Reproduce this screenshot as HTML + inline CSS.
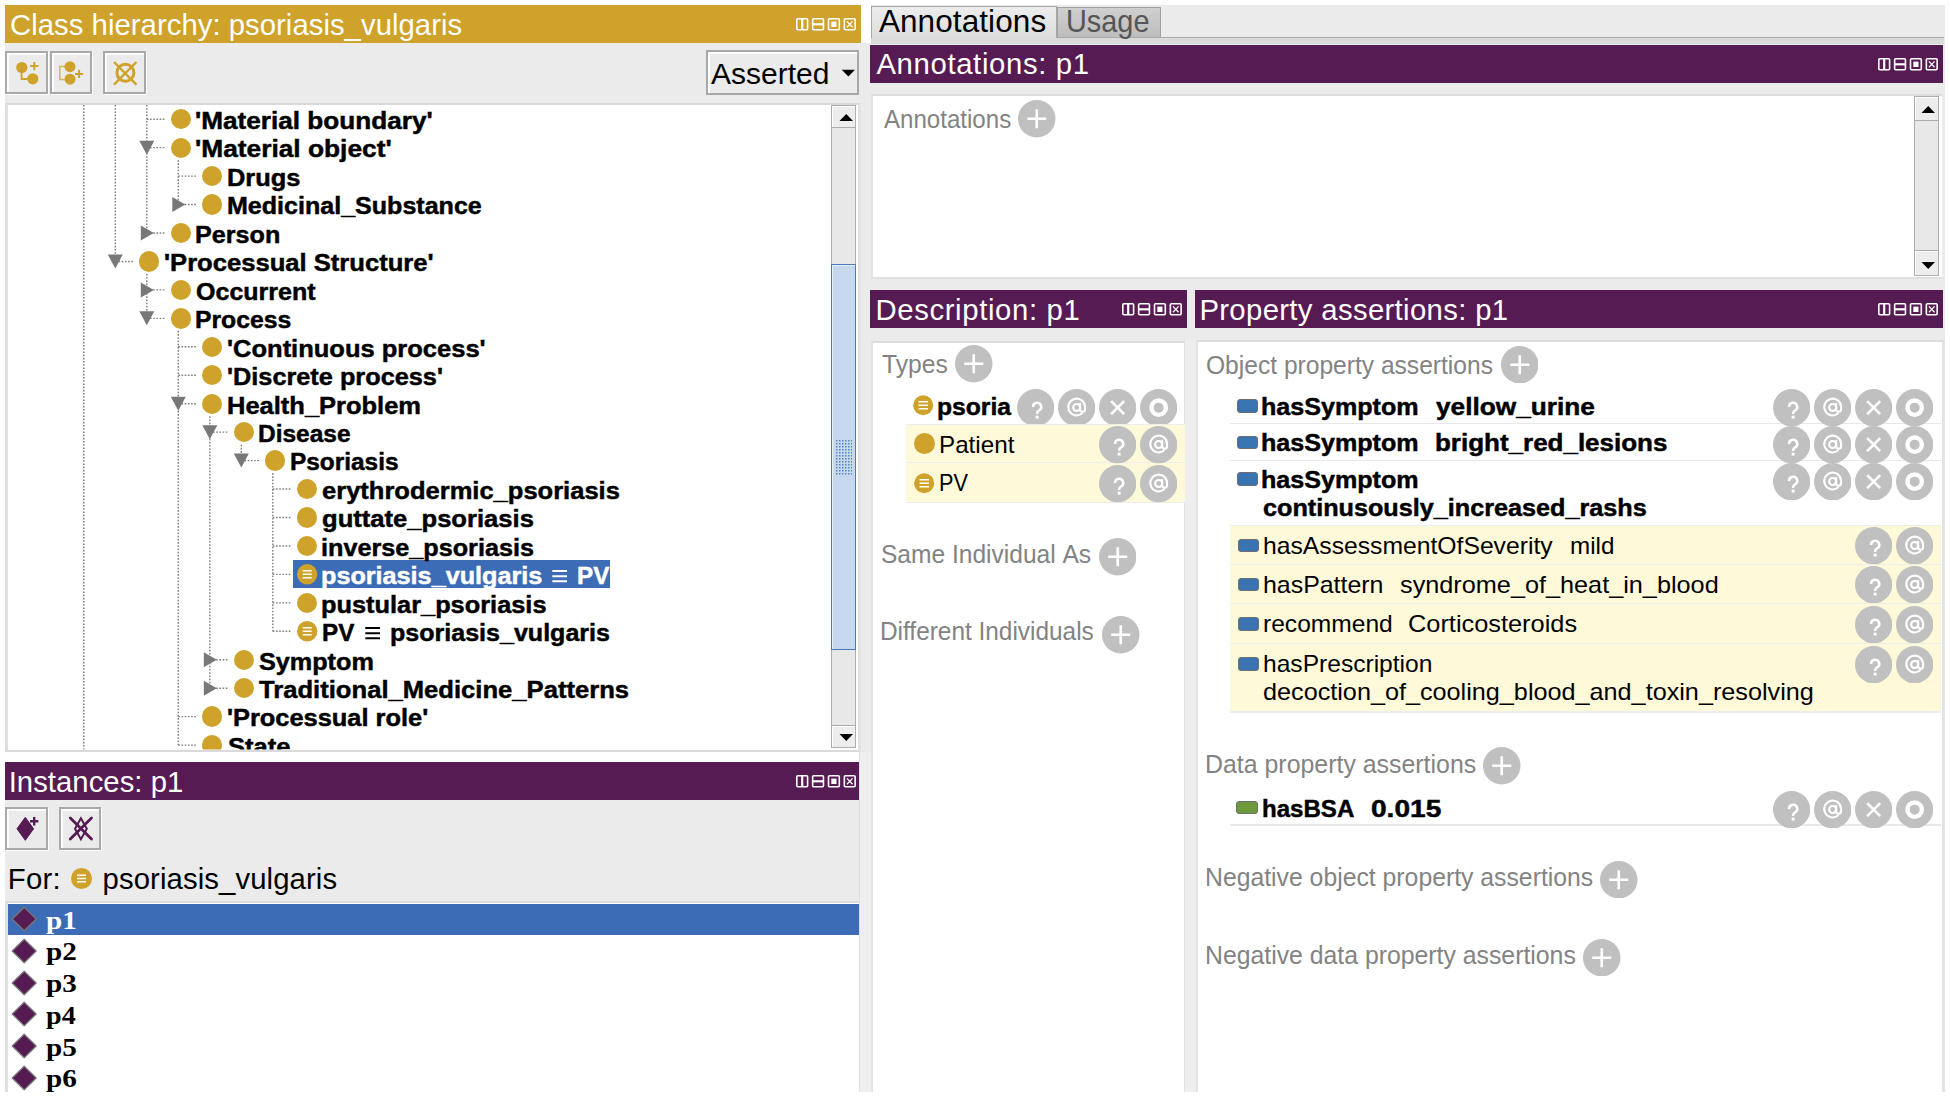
<!DOCTYPE html><html><head><meta charset="utf-8"><style>
*{margin:0;padding:0;box-sizing:border-box}
html,body{width:1950px;height:1097px;overflow:hidden;background:#fff}
body{position:relative;font-family:"Liberation Sans",sans-serif}
.ab{position:absolute}
.t{position:absolute;white-space:nowrap}
.hdr{position:absolute;color:#fff;font-size:29.3px;line-height:38px;white-space:nowrap}
.tree{position:absolute;white-space:nowrap;font-weight:bold;font-size:22.5px;letter-spacing:1.45px;color:#000;line-height:28px}
.lbl{position:absolute;white-space:nowrap;font-size:26px;letter-spacing:-0.7px;color:#7C7C7C;line-height:30px}
.btn{position:absolute;border-radius:50%;background:#C0C0C0}
</style></head><body>
<div class="ab" style="left:5px;top:5px;width:856px;height:38px;background:#CEA22B"></div>
<div class="t" style="left:10.00px;top:5.05px;line-height:40px;font-family:'Liberation Sans';font-weight:normal;font-size:29.3px;letter-spacing:0.033px;color:#fff;">Class&#160;hierarchy:&#160;psoriasis_vulgaris</div>
<svg class="ab" style="left:796px;top:18px" width="62" height="14" viewBox="0 0 62 14"><rect x="0.8" y="0.8" width="10.8" height="11" rx="1" fill="none" stroke="#fff" stroke-width="1.6"/><line x1="6.2" y1="1" x2="6.2" y2="11.8" stroke="#fff" stroke-width="2.2"/><rect x="16.65" y="0.8" width="10.8" height="11" rx="1" fill="none" stroke="#fff" stroke-width="1.6"/><line x1="16.85" y1="6.3" x2="27.45" y2="6.3" stroke="#fff" stroke-width="2.2"/><rect x="32.5" y="0.8" width="10.8" height="11" rx="1" fill="none" stroke="#fff" stroke-width="1.6"/><rect x="35.3" y="3.6" width="5.2" height="5.4" fill="#fff"/><rect x="48.349999999999994" y="0.8" width="10.8" height="11" rx="1" fill="none" stroke="#fff" stroke-width="1.6"/><path d="M50.949999999999996 3.4 L56.55 9.2 M56.55 3.4 L50.949999999999996 9.2" stroke="#fff" stroke-width="1.3"/></svg>
<div class="ab" style="left:5px;top:43px;width:856px;height:60px;background:#EBEBEB"></div>
<div class="ab" style="left:5.3px;top:51px;width:42.4px;height:42.6px;border:2px solid #A9A9A9;box-shadow:inset 1.8px 1.8px 0 #fff, 1px 1px 0 #fff"></div>
<div class="ab" style="left:49.8px;top:51px;width:42.4px;height:42.6px;border:2px solid #A9A9A9;box-shadow:inset 1.8px 1.8px 0 #fff, 1px 1px 0 #fff"></div>
<div class="ab" style="left:103.3px;top:51px;width:42.4px;height:42.6px;border:2px solid #A9A9A9;box-shadow:inset 1.8px 1.8px 0 #fff, 1px 1px 0 #fff"></div>
<svg class="ab" style="left:5px;top:51px" width="142" height="43" viewBox="5 51 142 43">
<g fill="#CEA22B" stroke="none">
<circle cx="21.8" cy="67.5" r="5.6"/><circle cx="32.8" cy="78.8" r="5.6"/>
</g>
<path d="M21.6 70 V79 H30" fill="none" stroke="#CEA22B" stroke-width="1.9"/>
<path d="M30.2 66.1 H38.4 M34.3 62 V70.2" stroke="#CEA22B" stroke-width="2"/>
<g fill="#CEA22B"><circle cx="70" cy="66.7" r="5.5"/><circle cx="70" cy="79.2" r="5.5"/></g>
<path d="M65 66.4 H59.8 V79.4 H65" fill="none" stroke="#CEA22B" stroke-width="1.5" opacity="0.75"/>
<path d="M75 73.9 H83.2 M79.1 69.8 V78" stroke="#CEA22B" stroke-width="2"/>
<circle cx="125.4" cy="72.8" r="8.5" fill="none" stroke="#CEA22B" stroke-width="3"/>
<path d="M114 62 L136.4 84.6 M136.4 62 L114 84.6" stroke="#CEA22B" stroke-width="2.4"/>
</svg>
<div class="ab" style="left:706px;top:50px;width:153px;height:45px;border:2px solid #A8A8A8;box-shadow:inset 2px 2px 0 #fff;background:#EBEBEB"></div>
<div class="t" style="left:711.00px;top:54.01px;line-height:40px;font-family:'Liberation Sans';font-weight:normal;font-size:30px;letter-spacing:-0.001px;color:#000;">Asserted</div>
<svg class="ab" style="left:841px;top:69px" width="15" height="9"><path d="M0.7 0.8 H14 L7.35 7.5 Z" fill="#000"/></svg>
<div class="ab" style="left:5px;top:103px;width:856px;height:649px;background:#fff;border-top:2px solid #D9D9D9;border-left:3px solid #E0E0E0;border-bottom:2px solid #DADADA;border-right:3px solid #E3E3E3"></div>
<div class="ab" style="left:0;top:0;width:1950px;height:1097px;clip-path:inset(105px 1120px 347.4px 8px)">
<svg class="ab" style="left:8px;top:105px" width="822" height="645" viewBox="8 105 822 645"><line x1="83.80000000000001" y1="105" x2="83.80000000000001" y2="750" stroke="#7C7C7C" stroke-width="1.4" stroke-dasharray="1.6 1.6" fill="none"/><line x1="115.30000000000001" y1="105" x2="115.30000000000001" y2="261.45" stroke="#7C7C7C" stroke-width="1.4" stroke-dasharray="1.6 1.6" fill="none"/><line x1="146.8" y1="105" x2="146.8" y2="233.0" stroke="#7C7C7C" stroke-width="1.4" stroke-dasharray="1.6 1.6" fill="none"/><line x1="146.8" y1="273.95" x2="146.8" y2="318.35" stroke="#7C7C7C" stroke-width="1.4" stroke-dasharray="1.6 1.6" fill="none"/><line x1="178.3" y1="160.15" x2="178.3" y2="204.55" stroke="#7C7C7C" stroke-width="1.4" stroke-dasharray="1.6 1.6" fill="none"/><line x1="178.3" y1="330.85" x2="178.3" y2="745.1" stroke="#7C7C7C" stroke-width="1.4" stroke-dasharray="1.6 1.6" fill="none"/><line x1="209.8" y1="416.2" x2="209.8" y2="688.2" stroke="#7C7C7C" stroke-width="1.4" stroke-dasharray="1.6 1.6" fill="none"/><line x1="241.3" y1="444.65" x2="241.3" y2="460.59999999999997" stroke="#7C7C7C" stroke-width="1.4" stroke-dasharray="1.6 1.6" fill="none"/><line x1="272.8" y1="473.09999999999997" x2="272.8" y2="631.3000000000001" stroke="#7C7C7C" stroke-width="1.4" stroke-dasharray="1.6 1.6" fill="none"/><line x1="146.8" y1="119.2" x2="165.60000000000002" y2="119.2" stroke="#7C7C7C" stroke-width="1.4" stroke-dasharray="1.6 1.6" fill="none"/><line x1="146.8" y1="147.65" x2="165.60000000000002" y2="147.65" stroke="#7C7C7C" stroke-width="1.4" stroke-dasharray="1.6 1.6" fill="none"/><path d="M139.3 140.65 H154.3 L146.8 154.65 Z" fill="#787878"/><line x1="178.3" y1="176.1" x2="197.10000000000002" y2="176.1" stroke="#7C7C7C" stroke-width="1.4" stroke-dasharray="1.6 1.6" fill="none"/><line x1="178.3" y1="204.55" x2="197.10000000000002" y2="204.55" stroke="#7C7C7C" stroke-width="1.4" stroke-dasharray="1.6 1.6" fill="none"/><path d="M172.3 197.05 V212.05 L185.3 204.55 Z" fill="#787878"/><line x1="146.8" y1="233.0" x2="165.60000000000002" y2="233.0" stroke="#7C7C7C" stroke-width="1.4" stroke-dasharray="1.6 1.6" fill="none"/><path d="M140.8 225.5 V240.5 L153.8 233.0 Z" fill="#787878"/><line x1="115.30000000000001" y1="261.45" x2="134.10000000000002" y2="261.45" stroke="#7C7C7C" stroke-width="1.4" stroke-dasharray="1.6 1.6" fill="none"/><path d="M107.80000000000001 254.45 H122.80000000000001 L115.30000000000001 268.45 Z" fill="#787878"/><line x1="146.8" y1="289.9" x2="165.60000000000002" y2="289.9" stroke="#7C7C7C" stroke-width="1.4" stroke-dasharray="1.6 1.6" fill="none"/><path d="M140.8 282.4 V297.4 L153.8 289.9 Z" fill="#787878"/><line x1="146.8" y1="318.35" x2="165.60000000000002" y2="318.35" stroke="#7C7C7C" stroke-width="1.4" stroke-dasharray="1.6 1.6" fill="none"/><path d="M139.3 311.35 H154.3 L146.8 325.35 Z" fill="#787878"/><line x1="178.3" y1="346.8" x2="197.10000000000002" y2="346.8" stroke="#7C7C7C" stroke-width="1.4" stroke-dasharray="1.6 1.6" fill="none"/><line x1="178.3" y1="375.25" x2="197.10000000000002" y2="375.25" stroke="#7C7C7C" stroke-width="1.4" stroke-dasharray="1.6 1.6" fill="none"/><line x1="178.3" y1="403.7" x2="197.10000000000002" y2="403.7" stroke="#7C7C7C" stroke-width="1.4" stroke-dasharray="1.6 1.6" fill="none"/><path d="M170.8 396.7 H185.8 L178.3 410.7 Z" fill="#787878"/><line x1="209.8" y1="432.15" x2="228.60000000000002" y2="432.15" stroke="#7C7C7C" stroke-width="1.4" stroke-dasharray="1.6 1.6" fill="none"/><path d="M202.3 425.15 H217.3 L209.8 439.15 Z" fill="#787878"/><line x1="241.3" y1="460.59999999999997" x2="260.1" y2="460.59999999999997" stroke="#7C7C7C" stroke-width="1.4" stroke-dasharray="1.6 1.6" fill="none"/><path d="M233.8 453.59999999999997 H248.8 L241.3 467.59999999999997 Z" fill="#787878"/><line x1="272.8" y1="489.04999999999995" x2="291.6" y2="489.04999999999995" stroke="#7C7C7C" stroke-width="1.4" stroke-dasharray="1.6 1.6" fill="none"/><line x1="272.8" y1="517.5" x2="291.6" y2="517.5" stroke="#7C7C7C" stroke-width="1.4" stroke-dasharray="1.6 1.6" fill="none"/><line x1="272.8" y1="545.95" x2="291.6" y2="545.95" stroke="#7C7C7C" stroke-width="1.4" stroke-dasharray="1.6 1.6" fill="none"/><line x1="272.8" y1="574.4" x2="291.6" y2="574.4" stroke="#7C7C7C" stroke-width="1.4" stroke-dasharray="1.6 1.6" fill="none"/><line x1="272.8" y1="602.85" x2="291.6" y2="602.85" stroke="#7C7C7C" stroke-width="1.4" stroke-dasharray="1.6 1.6" fill="none"/><line x1="272.8" y1="631.3000000000001" x2="291.6" y2="631.3000000000001" stroke="#7C7C7C" stroke-width="1.4" stroke-dasharray="1.6 1.6" fill="none"/><line x1="209.8" y1="659.75" x2="228.60000000000002" y2="659.75" stroke="#7C7C7C" stroke-width="1.4" stroke-dasharray="1.6 1.6" fill="none"/><path d="M203.8 652.25 V667.25 L216.8 659.75 Z" fill="#787878"/><line x1="209.8" y1="688.2" x2="228.60000000000002" y2="688.2" stroke="#7C7C7C" stroke-width="1.4" stroke-dasharray="1.6 1.6" fill="none"/><path d="M203.8 680.7 V695.7 L216.8 688.2 Z" fill="#787878"/><line x1="178.3" y1="716.65" x2="197.10000000000002" y2="716.65" stroke="#7C7C7C" stroke-width="1.4" stroke-dasharray="1.6 1.6" fill="none"/><line x1="178.3" y1="745.1" x2="197.10000000000002" y2="745.1" stroke="#7C7C7C" stroke-width="1.4" stroke-dasharray="1.6 1.6" fill="none"/></svg>
<div class="ab" style="left:293px;top:560px;width:317px;height:28px;background:#3D6CB6"></div>
<div class="ab" style="left:170.6px;top:109.0px;width:20.4px;height:20.4px;border-radius:50%;background:#CEA22B"></div>
<div class="t" style="left:195.26px;top:101.03px;line-height:40px;font-family:'Liberation Sans';font-weight:bold;font-size:23px;color:#000;transform:scaleX(1.1370);transform-origin:0 0;-webkit-text-stroke:0.45px #000;">'Material&#160;boundary'</div>
<div class="ab" style="left:170.6px;top:137.5px;width:20.4px;height:20.4px;border-radius:50%;background:#CEA22B"></div>
<div class="t" style="left:195.26px;top:129.48px;line-height:40px;font-family:'Liberation Sans';font-weight:bold;font-size:23px;color:#000;transform:scaleX(1.1436);transform-origin:0 0;-webkit-text-stroke:0.45px #000;">'Material&#160;object'</div>
<div class="ab" style="left:202.1px;top:165.9px;width:20.4px;height:20.4px;border-radius:50%;background:#CEA22B"></div>
<div class="t" style="left:226.79px;top:157.93px;line-height:40px;font-family:'Liberation Sans';font-weight:bold;font-size:23px;color:#000;transform:scaleX(1.1058);transform-origin:0 0;-webkit-text-stroke:0.45px #000;">Drugs</div>
<div class="ab" style="left:202.1px;top:194.4px;width:20.4px;height:20.4px;border-radius:50%;background:#CEA22B"></div>
<div class="t" style="left:226.81px;top:186.38px;line-height:40px;font-family:'Liberation Sans';font-weight:bold;font-size:23px;color:#000;transform:scaleX(1.0891);transform-origin:0 0;-webkit-text-stroke:0.45px #000;">Medicinal_Substance</div>
<div class="ab" style="left:170.6px;top:222.8px;width:20.4px;height:20.4px;border-radius:50%;background:#CEA22B"></div>
<div class="t" style="left:195.31px;top:214.83px;line-height:40px;font-family:'Liberation Sans';font-weight:bold;font-size:23px;color:#000;transform:scaleX(1.0932);transform-origin:0 0;-webkit-text-stroke:0.45px #000;">Person</div>
<div class="ab" style="left:139.1px;top:251.2px;width:20.4px;height:20.4px;border-radius:50%;background:#CEA22B"></div>
<div class="t" style="left:163.79px;top:243.28px;line-height:40px;font-family:'Liberation Sans';font-weight:bold;font-size:23px;color:#000;transform:scaleX(1.1128);transform-origin:0 0;-webkit-text-stroke:0.45px #000;">'Processual&#160;Structure'</div>
<div class="ab" style="left:170.6px;top:279.7px;width:20.4px;height:20.4px;border-radius:50%;background:#CEA22B"></div>
<div class="t" style="left:196.40px;top:271.73px;line-height:40px;font-family:'Liberation Sans';font-weight:bold;font-size:23px;color:#000;transform:scaleX(1.0883);transform-origin:0 0;-webkit-text-stroke:0.45px #000;">Occurrent</div>
<div class="ab" style="left:170.6px;top:308.2px;width:20.4px;height:20.4px;border-radius:50%;background:#CEA22B"></div>
<div class="t" style="left:195.32px;top:300.18px;line-height:40px;font-family:'Liberation Sans';font-weight:bold;font-size:23px;color:#000;transform:scaleX(1.0751);transform-origin:0 0;-webkit-text-stroke:0.45px #000;">Process</div>
<div class="ab" style="left:202.1px;top:336.6px;width:20.4px;height:20.4px;border-radius:50%;background:#CEA22B"></div>
<div class="t" style="left:226.79px;top:328.63px;line-height:40px;font-family:'Liberation Sans';font-weight:bold;font-size:23px;color:#000;transform:scaleX(1.1086);transform-origin:0 0;-webkit-text-stroke:0.45px #000;">'Continuous&#160;process'</div>
<div class="ab" style="left:202.1px;top:365.1px;width:20.4px;height:20.4px;border-radius:50%;background:#CEA22B"></div>
<div class="t" style="left:226.80px;top:357.08px;line-height:40px;font-family:'Liberation Sans';font-weight:bold;font-size:23px;color:#000;transform:scaleX(1.0998);transform-origin:0 0;-webkit-text-stroke:0.45px #000;">'Discrete&#160;process'</div>
<div class="ab" style="left:202.1px;top:393.5px;width:20.4px;height:20.4px;border-radius:50%;background:#CEA22B"></div>
<div class="t" style="left:226.79px;top:385.53px;line-height:40px;font-family:'Liberation Sans';font-weight:bold;font-size:23px;color:#000;transform:scaleX(1.1079);transform-origin:0 0;-webkit-text-stroke:0.45px #000;">Health_Problem</div>
<div class="ab" style="left:233.6px;top:421.9px;width:20.4px;height:20.4px;border-radius:50%;background:#CEA22B"></div>
<div class="t" style="left:258.34px;top:413.98px;line-height:40px;font-family:'Liberation Sans';font-weight:bold;font-size:23px;color:#000;transform:scaleX(1.0638);transform-origin:0 0;-webkit-text-stroke:0.45px #000;">Disease</div>
<div class="ab" style="left:265.1px;top:450.4px;width:20.4px;height:20.4px;border-radius:50%;background:#CEA22B"></div>
<div class="t" style="left:289.84px;top:442.43px;line-height:40px;font-family:'Liberation Sans';font-weight:bold;font-size:23px;color:#000;transform:scaleX(1.0607);transform-origin:0 0;-webkit-text-stroke:0.45px #000;">Psoriasis</div>
<div class="ab" style="left:296.6px;top:478.8px;width:20.4px;height:20.4px;border-radius:50%;background:#CEA22B"></div>
<div class="t" style="left:322.40px;top:470.88px;line-height:40px;font-family:'Liberation Sans';font-weight:bold;font-size:23px;color:#000;transform:scaleX(1.1096);transform-origin:0 0;-webkit-text-stroke:0.45px #000;">erythrodermic_psoriasis</div>
<div class="ab" style="left:296.6px;top:507.3px;width:20.4px;height:20.4px;border-radius:50%;background:#CEA22B"></div>
<div class="t" style="left:322.40px;top:499.33px;line-height:40px;font-family:'Liberation Sans';font-weight:bold;font-size:23px;color:#000;transform:scaleX(1.1125);transform-origin:0 0;-webkit-text-stroke:0.45px #000;">guttate_psoriasis</div>
<div class="ab" style="left:296.6px;top:535.8px;width:20.4px;height:20.4px;border-radius:50%;background:#CEA22B"></div>
<div class="t" style="left:321.30px;top:527.78px;line-height:40px;font-family:'Liberation Sans';font-weight:bold;font-size:23px;color:#000;transform:scaleX(1.0958);transform-origin:0 0;-webkit-text-stroke:0.45px #000;">inverse_psoriasis</div>
<svg class="ab" style="left:296.6px;top:564.2px" width="21" height="21" viewBox="0 0 21 21"><circle cx="10.2" cy="10.2" r="10.2" fill="#CEA22B"/><path d="M5.7 6.7 H14.7 M5.7 10.2 H14.7 M5.7 13.7 H14.7" stroke="#fff" stroke-width="1.6"/></svg>
<div class="t" style="left:321.20px;top:556.23px;line-height:40px;font-family:'Liberation Sans';font-weight:bold;font-size:23px;color:#fff;transform:scaleX(1.0954);transform-origin:0 0;-webkit-text-stroke:0.45px #fff;">psoriasis_vulgaris</div>
<svg class="ab" style="left:551.5px;top:569.4px" width="16" height="14"><path d="M0.3 2 H15 M0.3 7.2 H15 M0.3 12.3 H15" stroke="#fff" stroke-width="1.9"/></svg>
<div class="t" style="left:576.55px;top:556.23px;line-height:40px;font-family:'Liberation Sans';font-weight:bold;font-size:23px;color:#fff;transform:scaleX(1.0514);transform-origin:0 0;-webkit-text-stroke:0.45px #fff;">PV</div>
<div class="ab" style="left:296.6px;top:592.6px;width:20.4px;height:20.4px;border-radius:50%;background:#CEA22B"></div>
<div class="t" style="left:321.30px;top:584.68px;line-height:40px;font-family:'Liberation Sans';font-weight:bold;font-size:23px;color:#000;transform:scaleX(1.1025);transform-origin:0 0;-webkit-text-stroke:0.45px #000;">pustular_psoriasis</div>
<svg class="ab" style="left:296.6px;top:621.1px" width="21" height="21" viewBox="0 0 21 21"><circle cx="10.2" cy="10.2" r="10.2" fill="#CEA22B"/><path d="M5.7 6.7 H14.7 M5.7 10.2 H14.7 M5.7 13.7 H14.7" stroke="#fff" stroke-width="1.6"/></svg>
<div class="t" style="left:321.65px;top:613.13px;line-height:40px;font-family:'Liberation Sans';font-weight:bold;font-size:23px;color:#000;transform:scaleX(1.0514);transform-origin:0 0;-webkit-text-stroke:0.45px #000;">PV</div>
<svg class="ab" style="left:364.5px;top:626.3000000000001px" width="16" height="14"><path d="M0.3 2 H15 M0.3 7.2 H15 M0.3 12.3 H15" stroke="#000" stroke-width="2.1"/></svg>
<div class="t" style="left:390.41px;top:613.13px;line-height:40px;font-family:'Liberation Sans';font-weight:bold;font-size:23px;color:#000;transform:scaleX(1.0889);transform-origin:0 0;-webkit-text-stroke:0.45px #000;">psoriasis_vulgaris</div>
<div class="ab" style="left:233.6px;top:649.5px;width:20.4px;height:20.4px;border-radius:50%;background:#CEA22B"></div>
<div class="t" style="left:259.40px;top:641.58px;line-height:40px;font-family:'Liberation Sans';font-weight:bold;font-size:23px;color:#000;transform:scaleX(1.0954);transform-origin:0 0;-webkit-text-stroke:0.45px #000;">Symptom</div>
<div class="ab" style="left:233.6px;top:678.0px;width:20.4px;height:20.4px;border-radius:50%;background:#CEA22B"></div>
<div class="t" style="left:259.40px;top:670.03px;line-height:40px;font-family:'Liberation Sans';font-weight:bold;font-size:23px;color:#000;transform:scaleX(1.1136);transform-origin:0 0;-webkit-text-stroke:0.45px #000;">Traditional_Medicine_Patterns</div>
<div class="ab" style="left:202.1px;top:706.4px;width:20.4px;height:20.4px;border-radius:50%;background:#CEA22B"></div>
<div class="t" style="left:226.80px;top:698.48px;line-height:40px;font-family:'Liberation Sans';font-weight:bold;font-size:23px;color:#000;transform:scaleX(1.1041);transform-origin:0 0;-webkit-text-stroke:0.45px #000;">'Processual&#160;role'</div>
<div class="ab" style="left:202.1px;top:734.9px;width:20.4px;height:20.4px;border-radius:50%;background:#CEA22B"></div>
<div class="t" style="left:227.90px;top:726.93px;line-height:40px;font-family:'Liberation Sans';font-weight:bold;font-size:23px;color:#000;transform:scaleX(1.1127);transform-origin:0 0;-webkit-text-stroke:0.45px #000;">State</div>
</div>
<div class="ab" style="left:831px;top:105px;width:25px;height:643px;background:#E8E8E8;border:1.5px solid #ADADAD"></div>
<div class="ab" style="left:831px;top:105px;width:25px;height:23px;background:#EDEDED;border:1.5px solid #ADADAD;box-shadow:inset 1px 1px 0 #fff"></div>
<svg class="ab" style="left:838.5px;top:112.5px" width="15" height="9"><path d="M0.5 8 H14 L7.25 1 Z" fill="#000"/></svg>
<div class="ab" style="left:831px;top:725px;width:25px;height:23px;background:#EDEDED;border:1.5px solid #ADADAD;box-shadow:inset 1px 1px 0 #fff"></div>
<svg class="ab" style="left:838.5px;top:733px" width="15" height="9"><path d="M0.5 1 H14 L7.25 8 Z" fill="#000"/></svg>
<div class="ab" style="left:831px;top:264px;width:25px;height:386px;background:#C6D8EC;border:1.5px solid #4C78C0;box-shadow:inset 1px 1px 0 #E8F0FA"></div>
<svg class="ab" style="left:836px;top:440px" width="16" height="35"><defs><pattern id="gp" width="3" height="3" patternUnits="userSpaceOnUse"><rect width="1.5" height="1.5" fill="#5A82C4"/></pattern></defs><rect width="16" height="35" fill="url(#gp)"/></svg>
<div class="ab" style="left:5px;top:762px;width:856px;height:38px;background:#551B52"></div>
<div class="t" style="left:8.70px;top:762.25px;line-height:40px;font-family:'Liberation Sans';font-weight:normal;font-size:29.3px;letter-spacing:0.027px;color:#fff;">Instances:&#160;p1</div>
<svg class="ab" style="left:796px;top:775px" width="62" height="14" viewBox="0 0 62 14"><rect x="0.8" y="0.8" width="10.8" height="11" rx="1" fill="none" stroke="#fff" stroke-width="1.6"/><line x1="6.2" y1="1" x2="6.2" y2="11.8" stroke="#fff" stroke-width="2.2"/><rect x="16.65" y="0.8" width="10.8" height="11" rx="1" fill="none" stroke="#fff" stroke-width="1.6"/><line x1="16.85" y1="6.3" x2="27.45" y2="6.3" stroke="#fff" stroke-width="2.2"/><rect x="32.5" y="0.8" width="10.8" height="11" rx="1" fill="none" stroke="#fff" stroke-width="1.6"/><rect x="35.3" y="3.6" width="5.2" height="5.4" fill="#fff"/><rect x="48.349999999999994" y="0.8" width="10.8" height="11" rx="1" fill="none" stroke="#fff" stroke-width="1.6"/><path d="M50.949999999999996 3.4 L56.55 9.2 M56.55 3.4 L50.949999999999996 9.2" stroke="#fff" stroke-width="1.3"/></svg>
<div class="ab" style="left:5px;top:800px;width:854px;height:102px;background:#EBEBEB"></div>
<div class="ab" style="left:5.4px;top:807px;width:42.4px;height:42.6px;border:2px solid #A9A9A9;box-shadow:inset 1.8px 1.8px 0 #fff, 1px 1px 0 #fff"></div>
<div class="ab" style="left:59px;top:807px;width:42.4px;height:42.6px;border:2px solid #A9A9A9;box-shadow:inset 1.8px 1.8px 0 #fff, 1px 1px 0 #fff"></div>
<svg class="ab" style="left:6px;top:807px" width="96" height="43" viewBox="6 807 96 43">
<path d="M25.3 817.3 L33.6 828.8 L25.3 840.3 L17 828.8 Z" fill="#551B52" stroke="#551B52" stroke-width="1" stroke-linejoin="round"/>
<path d="M30 821.3 H38.4 M34.2 817.1 V825.5" stroke="#551B52" stroke-width="2.4"/>
<path d="M70.3 818 L91.5 839 M91.5 818 L70.3 839" stroke="#551B52" stroke-width="2.8" stroke-linecap="round"/>
<path d="M80.9 818.3 L86.8 828.8 L80.9 839.3 L75 828.8 Z" fill="none" stroke="#551B52" stroke-width="2"/>
</svg>
<div class="t" style="left:7.80px;top:858.85px;line-height:40px;font-family:'Liberation Sans';font-weight:normal;font-size:29.3px;letter-spacing:0.252px;color:#000;">For:</div>
<svg class="ab" style="left:70.8px;top:868px" width="22" height="22" viewBox="0 0 22 22"><circle cx="10.5" cy="10.5" r="10.5" fill="#CEA22B"/><path d="M6 7.3 H15 M6 10.5 H15 M6 13.7 H15" stroke="#fff" stroke-width="1.4"/></svg>
<div class="t" style="left:102.60px;top:858.85px;line-height:40px;font-family:'Liberation Sans';font-weight:normal;font-size:29.3px;letter-spacing:0.094px;color:#000;">psoriasis_vulgaris</div>
<div class="ab" style="left:5px;top:901px;width:854px;height:191px;background:#fff;border-left:3px solid #E0E0E0;border-top:2px solid #DCDCDC"></div>
<div class="ab" style="left:8px;top:904px;width:851px;height:30.5px;background:#3D6CB6"></div>
<svg class="ab" style="left:11px;top:906.0px" width="27" height="26" viewBox="0 0 27 26"><path d="M13.2 1.2 L25.2 13 L13.2 24.8 L1.2 13 Z" fill="#551B52" stroke="#777" stroke-width="1.2" stroke-linejoin="round"/></svg>
<div class="t" style="left:46.00px;top:900.59px;line-height:40px;font-family:'Liberation Serif';font-weight:bold;font-size:25.5px;color:#fff;transform:scaleX(1.1458);transform-origin:0 0;">p1</div>
<svg class="ab" style="left:11px;top:937.8px" width="27" height="26" viewBox="0 0 27 26"><path d="M13.2 1.2 L25.2 13 L13.2 24.8 L1.2 13 Z" fill="#551B52" stroke="#777" stroke-width="1.2" stroke-linejoin="round"/></svg>
<div class="t" style="left:46.00px;top:932.34px;line-height:40px;font-family:'Liberation Serif';font-weight:bold;font-size:25.5px;color:#000;transform:scaleX(1.1458);transform-origin:0 0;">p2</div>
<svg class="ab" style="left:11px;top:969.5px" width="27" height="26" viewBox="0 0 27 26"><path d="M13.2 1.2 L25.2 13 L13.2 24.8 L1.2 13 Z" fill="#551B52" stroke="#777" stroke-width="1.2" stroke-linejoin="round"/></svg>
<div class="t" style="left:46.00px;top:964.09px;line-height:40px;font-family:'Liberation Serif';font-weight:bold;font-size:25.5px;color:#000;transform:scaleX(1.1458);transform-origin:0 0;">p3</div>
<svg class="ab" style="left:11px;top:1001.2px" width="27" height="26" viewBox="0 0 27 26"><path d="M13.2 1.2 L25.2 13 L13.2 24.8 L1.2 13 Z" fill="#551B52" stroke="#777" stroke-width="1.2" stroke-linejoin="round"/></svg>
<div class="t" style="left:46.00px;top:995.84px;line-height:40px;font-family:'Liberation Serif';font-weight:bold;font-size:25.5px;color:#000;transform:scaleX(1.1037);transform-origin:0 0;">p4</div>
<svg class="ab" style="left:11px;top:1033.0px" width="27" height="26" viewBox="0 0 27 26"><path d="M13.2 1.2 L25.2 13 L13.2 24.8 L1.2 13 Z" fill="#551B52" stroke="#777" stroke-width="1.2" stroke-linejoin="round"/></svg>
<div class="t" style="left:46.00px;top:1027.59px;line-height:40px;font-family:'Liberation Serif';font-weight:bold;font-size:25.5px;color:#000;transform:scaleX(1.1458);transform-origin:0 0;">p5</div>
<svg class="ab" style="left:11px;top:1064.8px" width="27" height="26" viewBox="0 0 27 26"><path d="M13.2 1.2 L25.2 13 L13.2 24.8 L1.2 13 Z" fill="#551B52" stroke="#777" stroke-width="1.2" stroke-linejoin="round"/></svg>
<div class="t" style="left:46.00px;top:1059.34px;line-height:40px;font-family:'Liberation Serif';font-weight:bold;font-size:25.5px;color:#000;transform:scaleX(1.1458);transform-origin:0 0;">p6</div>
<div class="ab" style="left:859px;top:752px;width:14px;height:340px;background:#EEEEEE;border-left:1.5px solid #E0E0E0;border-right:1.5px solid #E0E0E0"></div>
<div class="ab" style="left:871px;top:5px;width:1074px;height:1087px;background:#EBEBEB"></div>
<div class="ab" style="left:861px;top:43px;width:10px;height:709px;background:#EBEBEB"></div>
<div class="ab" style="left:871px;top:36.5px;width:1073px;height:7px;background:#DADADA;border-top:1.6px solid #A8A8A8"></div>
<div class="ab" style="left:871px;top:6px;width:186px;height:32px;background:linear-gradient(#EDEDED,#DCDCDC);border:1.5px solid #A8A8A8;border-bottom:none"></div>
<div class="ab" style="left:1057px;top:7px;width:104px;height:30px;background:linear-gradient(#CFCFCF,#BDBDBD);border:1.5px solid #A0A0A0;border-bottom:none"></div>
<div class="t" style="left:878.90px;top:1.49px;line-height:40px;font-family:'Liberation Sans';font-weight:normal;font-size:31.5px;letter-spacing:0.088px;color:#000;">Annotations</div>
<div class="t" style="left:1065.77px;top:1.49px;line-height:40px;font-family:'Liberation Sans';font-weight:normal;font-size:31.5px;color:#555;transform:scaleX(0.9171);transform-origin:0 0;">Usage</div>
<div class="ab" style="left:870px;top:44.5px;width:1073px;height:38px;background:#551B52"></div>
<div class="t" style="left:876.40px;top:44.25px;line-height:40px;font-family:'Liberation Sans';font-weight:normal;font-size:29.3px;letter-spacing:0.642px;color:#fff;">Annotations:&#160;p1</div>
<svg class="ab" style="left:1878px;top:57.5px" width="62" height="14" viewBox="0 0 62 14"><rect x="0.8" y="0.8" width="10.8" height="11" rx="1" fill="none" stroke="#fff" stroke-width="1.6"/><line x1="6.2" y1="1" x2="6.2" y2="11.8" stroke="#fff" stroke-width="2.2"/><rect x="16.65" y="0.8" width="10.8" height="11" rx="1" fill="none" stroke="#fff" stroke-width="1.6"/><line x1="16.85" y1="6.3" x2="27.45" y2="6.3" stroke="#fff" stroke-width="2.2"/><rect x="32.5" y="0.8" width="10.8" height="11" rx="1" fill="none" stroke="#fff" stroke-width="1.6"/><rect x="35.3" y="3.6" width="5.2" height="5.4" fill="#fff"/><rect x="48.349999999999994" y="0.8" width="10.8" height="11" rx="1" fill="none" stroke="#fff" stroke-width="1.6"/><path d="M50.949999999999996 3.4 L56.55 9.2 M56.55 3.4 L50.949999999999996 9.2" stroke="#fff" stroke-width="1.3"/></svg>
<div class="ab" style="left:871px;top:94px;width:1071px;height:185px;background:#fff;border-top:2px solid #DCDCDC;border-left:2px solid #E3E3E3;border-bottom:2px solid #E0E0E0"></div>
<div class="t" style="left:883.60px;top:99.39px;line-height:40px;font-family:'Liberation Sans';font-weight:normal;font-size:26px;color:#838383;transform:scaleX(0.9263);transform-origin:0 0;">Annotations</div>
<svg class="ab" style="left:1018px;top:100px" width="37.5" height="37.5" viewBox="0 0 37.5 37.5"><circle cx="18.75" cy="18.75" r="18.75" fill="#C0C0C0"/><path d="M9.25 18.75 H28.25 M18.75 9.25 V28.25" stroke="#fff" stroke-width="2.6"/></svg>
<div class="ab" style="left:1913.5px;top:96px;width:25px;height:180px;background:#E8E8E8;border:1.5px solid #ADADAD"></div>
<div class="ab" style="left:1913.5px;top:96px;width:25px;height:25px;background:#EDEDED;border:1.5px solid #ADADAD;box-shadow:inset 1px 1px 0 #fff"></div>
<svg class="ab" style="left:1920.5px;top:105px" width="15" height="9"><path d="M0.5 8 H14 L7.25 1 Z" fill="#000"/></svg>
<div class="ab" style="left:1913.5px;top:250px;width:25px;height:26px;background:#EDEDED;border:1.5px solid #ADADAD;box-shadow:inset 1px 1px 0 #fff"></div>
<svg class="ab" style="left:1920.5px;top:260.5px" width="15" height="9"><path d="M0.5 1 H14 L7.25 8 Z" fill="#000"/></svg>
<div class="ab" style="left:870px;top:289.5px;width:317px;height:38px;background:#551B52"></div>
<div class="t" style="left:875.40px;top:289.65px;line-height:40px;font-family:'Liberation Sans';font-weight:normal;font-size:29.3px;letter-spacing:0.642px;color:#fff;">Description:&#160;p1</div>
<svg class="ab" style="left:1122px;top:302.5px" width="62" height="14" viewBox="0 0 62 14"><rect x="0.8" y="0.8" width="10.8" height="11" rx="1" fill="none" stroke="#fff" stroke-width="1.6"/><line x1="6.2" y1="1" x2="6.2" y2="11.8" stroke="#fff" stroke-width="2.2"/><rect x="16.65" y="0.8" width="10.8" height="11" rx="1" fill="none" stroke="#fff" stroke-width="1.6"/><line x1="16.85" y1="6.3" x2="27.45" y2="6.3" stroke="#fff" stroke-width="2.2"/><rect x="32.5" y="0.8" width="10.8" height="11" rx="1" fill="none" stroke="#fff" stroke-width="1.6"/><rect x="35.3" y="3.6" width="5.2" height="5.4" fill="#fff"/><rect x="48.349999999999994" y="0.8" width="10.8" height="11" rx="1" fill="none" stroke="#fff" stroke-width="1.6"/><path d="M50.949999999999996 3.4 L56.55 9.2 M56.55 3.4 L50.949999999999996 9.2" stroke="#fff" stroke-width="1.3"/></svg>
<div class="ab" style="left:1195px;top:289.5px;width:748px;height:38px;background:#551B52"></div>
<div class="t" style="left:1199.40px;top:289.85px;line-height:40px;font-family:'Liberation Sans';font-weight:normal;font-size:29.3px;letter-spacing:0.338px;color:#fff;">Property&#160;assertions:&#160;p1</div>
<svg class="ab" style="left:1878px;top:302.5px" width="62" height="14" viewBox="0 0 62 14"><rect x="0.8" y="0.8" width="10.8" height="11" rx="1" fill="none" stroke="#fff" stroke-width="1.6"/><line x1="6.2" y1="1" x2="6.2" y2="11.8" stroke="#fff" stroke-width="2.2"/><rect x="16.65" y="0.8" width="10.8" height="11" rx="1" fill="none" stroke="#fff" stroke-width="1.6"/><line x1="16.85" y1="6.3" x2="27.45" y2="6.3" stroke="#fff" stroke-width="2.2"/><rect x="32.5" y="0.8" width="10.8" height="11" rx="1" fill="none" stroke="#fff" stroke-width="1.6"/><rect x="35.3" y="3.6" width="5.2" height="5.4" fill="#fff"/><rect x="48.349999999999994" y="0.8" width="10.8" height="11" rx="1" fill="none" stroke="#fff" stroke-width="1.6"/><path d="M50.949999999999996 3.4 L56.55 9.2 M56.55 3.4 L50.949999999999996 9.2" stroke="#fff" stroke-width="1.3"/></svg>
<div class="ab" style="left:871px;top:340.5px;width:314px;height:751.5px;background:#fff;border-top:2px solid #DCDCDC;border-left:2px solid #E3E3E3"></div>
<div class="ab" style="left:1184px;top:340px;width:14px;height:752px;background:#EEEEEE;border-left:1.5px solid #E0E0E0;border-right:1.5px solid #E0E0E0"></div>
<div class="ab" style="left:1196px;top:340px;width:749px;height:752px;background:#fff;border-top:2px solid #DCDCDC;border-left:2px solid #E3E3E3;border-right:3px solid #E3E3E3"></div>
<div class="t" style="left:881.50px;top:343.99px;line-height:40px;font-family:'Liberation Sans';font-weight:normal;font-size:26px;color:#838383;transform:scaleX(0.9471);transform-origin:0 0;">Types</div>
<svg class="ab" style="left:955px;top:345px" width="37.5" height="37.5" viewBox="0 0 37.5 37.5"><circle cx="18.75" cy="18.75" r="18.75" fill="#C0C0C0"/><path d="M9.25 18.75 H28.25 M18.75 9.25 V28.25" stroke="#fff" stroke-width="2.6"/></svg>
<svg class="ab" style="left:913px;top:395px" width="21" height="21" viewBox="0 0 21 21"><circle cx="10.2" cy="10.2" r="10" fill="#CEA22B"/><path d="M5.5 6.7 H15 M5.5 10.2 H15 M5.5 13.7 H15" stroke="#fff" stroke-width="1.5"/></svg>
<div class="t" style="left:937.33px;top:386.63px;line-height:40px;font-family:'Liberation Sans';font-weight:bold;font-size:23px;color:#000;transform:scaleX(1.0728);transform-origin:0 0;-webkit-text-stroke:0.45px #000;">psoria</div>
<svg class="ab" style="left:1016.9px;top:388.9px" width="37.3" height="37.3" viewBox="0 0 37.3 37.3"><circle cx="18.65" cy="18.65" r="18.65" fill="#C0C0C0"/><path d="M16.05 17.95 A4.1 4.1 0 1 1 22.15 21.45 Q20.15 22.45 20.15 24.25 V25.05" fill="none" stroke="#fff" stroke-width="2.5"/><rect x="18.65" y="26.65" width="3" height="2.9" fill="#fff"/></svg>
<svg class="ab" style="left:1057.9px;top:388.9px" width="37.3" height="37.3" viewBox="0 0 37.3 37.3"><circle cx="18.65" cy="18.65" r="18.65" fill="#C0C0C0"/><g transform="translate(3.65,3.95)"><path d="M20.3 20.6 A8.4 8.4 0 1 1 23.4 13.5 V16.3 A2.45 2.45 0 0 1 18.5 16.3 V10.8" fill="none" stroke="#fff" stroke-width="2.1" stroke-linecap="round"/><circle cx="15" cy="14.5" r="3.5" fill="none" stroke="#fff" stroke-width="2.1"/></g></svg>
<svg class="ab" style="left:1099.0px;top:388.9px" width="37.3" height="37.3" viewBox="0 0 37.3 37.3"><circle cx="18.65" cy="18.65" r="18.65" fill="#C0C0C0"/><path d="M12.149999999999999 12.149999999999999 L25.15 25.15 M25.15 12.149999999999999 L12.149999999999999 25.15" stroke="#fff" stroke-width="2.6"/></svg>
<svg class="ab" style="left:1140.1px;top:388.9px" width="37.3" height="37.3" viewBox="0 0 37.3 37.3"><circle cx="18.65" cy="18.65" r="18.65" fill="#C0C0C0"/><circle cx="18.65" cy="18.65" r="7.2" fill="none" stroke="#fff" stroke-width="4.4"/></svg>
<div class="ab" style="left:905.5px;top:423.5px;width:279px;height:38.5px;background:#FDF9D9;border-top:1px solid #EDEDED"></div>
<div class="ab" style="left:905.5px;top:462px;width:279px;height:40.5px;background:#FDF9D9;border-top:1.5px solid #EDEDED;border-bottom:1.5px solid #EDEDED"></div>
<div class="ab" style="left:913.7px;top:433px;width:21px;height:21px;border-radius:50%;background:#CEA22B"></div>
<div class="t" style="left:938.69px;top:424.58px;line-height:40px;font-family:'Liberation Sans';font-weight:normal;font-size:24px;color:#000;transform:scaleX(1.0088);transform-origin:0 0;">Patient</div>
<svg class="ab" style="left:1098.8px;top:426.4px" width="37.3" height="37.3" viewBox="0 0 37.3 37.3"><circle cx="18.65" cy="18.65" r="18.65" fill="#C0C0C0"/><path d="M16.05 17.95 A4.1 4.1 0 1 1 22.15 21.45 Q20.15 22.45 20.15 24.25 V25.05" fill="none" stroke="#fff" stroke-width="2.5"/><rect x="18.65" y="26.65" width="3" height="2.9" fill="#fff"/></svg>
<svg class="ab" style="left:1139.9px;top:426.4px" width="37.3" height="37.3" viewBox="0 0 37.3 37.3"><circle cx="18.65" cy="18.65" r="18.65" fill="#C0C0C0"/><g transform="translate(3.65,3.95)"><path d="M20.3 20.6 A8.4 8.4 0 1 1 23.4 13.5 V16.3 A2.45 2.45 0 0 1 18.5 16.3 V10.8" fill="none" stroke="#fff" stroke-width="2.1" stroke-linecap="round"/><circle cx="15" cy="14.5" r="3.5" fill="none" stroke="#fff" stroke-width="2.1"/></g></svg>
<svg class="ab" style="left:913.5px;top:473px" width="21" height="21" viewBox="0 0 21 21"><circle cx="10.2" cy="10.2" r="10" fill="#CEA22B"/><path d="M5.5 6.7 H15 M5.5 10.2 H15 M5.5 13.7 H15" stroke="#fff" stroke-width="1.5"/></svg>
<div class="t" style="left:938.80px;top:462.78px;line-height:40px;font-family:'Liberation Sans';font-weight:normal;font-size:24px;color:#000;transform:scaleX(0.9030);transform-origin:0 0;">PV</div>
<svg class="ab" style="left:1098.8px;top:465.4px" width="37.3" height="37.3" viewBox="0 0 37.3 37.3"><circle cx="18.65" cy="18.65" r="18.65" fill="#C0C0C0"/><path d="M16.05 17.95 A4.1 4.1 0 1 1 22.15 21.45 Q20.15 22.45 20.15 24.25 V25.05" fill="none" stroke="#fff" stroke-width="2.5"/><rect x="18.65" y="26.65" width="3" height="2.9" fill="#fff"/></svg>
<svg class="ab" style="left:1139.9px;top:465.4px" width="37.3" height="37.3" viewBox="0 0 37.3 37.3"><circle cx="18.65" cy="18.65" r="18.65" fill="#C0C0C0"/><g transform="translate(3.65,3.95)"><path d="M20.3 20.6 A8.4 8.4 0 1 1 23.4 13.5 V16.3 A2.45 2.45 0 0 1 18.5 16.3 V10.8" fill="none" stroke="#fff" stroke-width="2.1" stroke-linecap="round"/><circle cx="15" cy="14.5" r="3.5" fill="none" stroke="#fff" stroke-width="2.1"/></g></svg>
<div class="t" style="left:881.36px;top:534.39px;line-height:40px;font-family:'Liberation Sans';font-weight:normal;font-size:26px;color:#838383;transform:scaleX(0.9442);transform-origin:0 0;">Same&#160;Individual&#160;As</div>
<svg class="ab" style="left:1098.5px;top:538px" width="37.5" height="37.5" viewBox="0 0 37.5 37.5"><circle cx="18.75" cy="18.75" r="18.75" fill="#C0C0C0"/><path d="M9.25 18.75 H28.25 M18.75 9.25 V28.25" stroke="#fff" stroke-width="2.6"/></svg>
<div class="t" style="left:880.42px;top:611.19px;line-height:40px;font-family:'Liberation Sans';font-weight:normal;font-size:26px;color:#838383;transform:scaleX(0.9382);transform-origin:0 0;">Different&#160;Individuals</div>
<svg class="ab" style="left:1102px;top:616px" width="37.5" height="37.5" viewBox="0 0 37.5 37.5"><circle cx="18.75" cy="18.75" r="18.75" fill="#C0C0C0"/><path d="M9.25 18.75 H28.25 M18.75 9.25 V28.25" stroke="#fff" stroke-width="2.6"/></svg>
<div class="t" style="left:1206.05px;top:344.79px;line-height:40px;font-family:'Liberation Sans';font-weight:normal;font-size:26px;color:#838383;transform:scaleX(0.9456);transform-origin:0 0;">Object&#160;property&#160;assertions</div>
<svg class="ab" style="left:1500.5px;top:345.5px" width="37.5" height="37.5" viewBox="0 0 37.5 37.5"><circle cx="18.75" cy="18.75" r="18.75" fill="#C0C0C0"/><path d="M9.25 18.75 H28.25 M18.75 9.25 V28.25" stroke="#fff" stroke-width="2.6"/></svg>
<div class="ab" style="left:1236.7px;top:399px;width:21.5px;height:13.5px;border-radius:3px;background:#3A73B2;border:1.3px solid #6E6E6E"></div>
<div class="t" style="left:1261.41px;top:387.13px;line-height:40px;font-family:'Liberation Sans';font-weight:bold;font-size:23px;color:#000;transform:scaleX(1.0911);transform-origin:0 0;-webkit-text-stroke:0.45px #000;">hasSymptom</div>
<div class="t" style="left:1436.00px;top:387.13px;line-height:40px;font-family:'Liberation Sans';font-weight:bold;font-size:23px;color:#000;transform:scaleX(1.1405);transform-origin:0 0;-webkit-text-stroke:0.45px #000;">yellow_urine</div>
<div class="ab" style="left:1230px;top:422.5px;width:711px;height:1.5px;background:#E8E8E8"></div>
<svg class="ab" style="left:1772.5px;top:389.0px" width="37.3" height="37.3" viewBox="0 0 37.3 37.3"><circle cx="18.65" cy="18.65" r="18.65" fill="#C0C0C0"/><path d="M16.05 17.95 A4.1 4.1 0 1 1 22.15 21.45 Q20.15 22.45 20.15 24.25 V25.05" fill="none" stroke="#fff" stroke-width="2.5"/><rect x="18.65" y="26.65" width="3" height="2.9" fill="#fff"/></svg>
<svg class="ab" style="left:1813.6px;top:389.0px" width="37.3" height="37.3" viewBox="0 0 37.3 37.3"><circle cx="18.65" cy="18.65" r="18.65" fill="#C0C0C0"/><g transform="translate(3.65,3.95)"><path d="M20.3 20.6 A8.4 8.4 0 1 1 23.4 13.5 V16.3 A2.45 2.45 0 0 1 18.5 16.3 V10.8" fill="none" stroke="#fff" stroke-width="2.1" stroke-linecap="round"/><circle cx="15" cy="14.5" r="3.5" fill="none" stroke="#fff" stroke-width="2.1"/></g></svg>
<svg class="ab" style="left:1854.8px;top:389.0px" width="37.3" height="37.3" viewBox="0 0 37.3 37.3"><circle cx="18.65" cy="18.65" r="18.65" fill="#C0C0C0"/><path d="M12.149999999999999 12.149999999999999 L25.15 25.15 M25.15 12.149999999999999 L12.149999999999999 25.15" stroke="#fff" stroke-width="2.6"/></svg>
<svg class="ab" style="left:1895.8px;top:389.0px" width="37.3" height="37.3" viewBox="0 0 37.3 37.3"><circle cx="18.65" cy="18.65" r="18.65" fill="#C0C0C0"/><circle cx="18.65" cy="18.65" r="7.2" fill="none" stroke="#fff" stroke-width="4.4"/></svg>
<div class="ab" style="left:1236.7px;top:435.5px;width:21.5px;height:13.5px;border-radius:3px;background:#3A73B2;border:1.3px solid #6E6E6E"></div>
<div class="t" style="left:1261.41px;top:423.13px;line-height:40px;font-family:'Liberation Sans';font-weight:bold;font-size:23px;color:#000;transform:scaleX(1.0911);transform-origin:0 0;-webkit-text-stroke:0.45px #000;">hasSymptom</div>
<div class="t" style="left:1434.87px;top:423.13px;line-height:40px;font-family:'Liberation Sans';font-weight:bold;font-size:23px;color:#000;transform:scaleX(1.1295);transform-origin:0 0;-webkit-text-stroke:0.45px #000;">bright_red_lesions</div>
<div class="ab" style="left:1230px;top:459.5px;width:711px;height:1.5px;background:#E8E8E8"></div>
<svg class="ab" style="left:1772.5px;top:426.0px" width="37.3" height="37.3" viewBox="0 0 37.3 37.3"><circle cx="18.65" cy="18.65" r="18.65" fill="#C0C0C0"/><path d="M16.05 17.95 A4.1 4.1 0 1 1 22.15 21.45 Q20.15 22.45 20.15 24.25 V25.05" fill="none" stroke="#fff" stroke-width="2.5"/><rect x="18.65" y="26.65" width="3" height="2.9" fill="#fff"/></svg>
<svg class="ab" style="left:1813.6px;top:426.0px" width="37.3" height="37.3" viewBox="0 0 37.3 37.3"><circle cx="18.65" cy="18.65" r="18.65" fill="#C0C0C0"/><g transform="translate(3.65,3.95)"><path d="M20.3 20.6 A8.4 8.4 0 1 1 23.4 13.5 V16.3 A2.45 2.45 0 0 1 18.5 16.3 V10.8" fill="none" stroke="#fff" stroke-width="2.1" stroke-linecap="round"/><circle cx="15" cy="14.5" r="3.5" fill="none" stroke="#fff" stroke-width="2.1"/></g></svg>
<svg class="ab" style="left:1854.8px;top:426.0px" width="37.3" height="37.3" viewBox="0 0 37.3 37.3"><circle cx="18.65" cy="18.65" r="18.65" fill="#C0C0C0"/><path d="M12.149999999999999 12.149999999999999 L25.15 25.15 M25.15 12.149999999999999 L12.149999999999999 25.15" stroke="#fff" stroke-width="2.6"/></svg>
<svg class="ab" style="left:1895.8px;top:426.0px" width="37.3" height="37.3" viewBox="0 0 37.3 37.3"><circle cx="18.65" cy="18.65" r="18.65" fill="#C0C0C0"/><circle cx="18.65" cy="18.65" r="7.2" fill="none" stroke="#fff" stroke-width="4.4"/></svg>
<div class="ab" style="left:1236.7px;top:472px;width:21.5px;height:13.5px;border-radius:3px;background:#3A73B2;border:1.3px solid #6E6E6E"></div>
<div class="t" style="left:1261.41px;top:459.73px;line-height:40px;font-family:'Liberation Sans';font-weight:bold;font-size:23px;color:#000;transform:scaleX(1.0911);transform-origin:0 0;-webkit-text-stroke:0.45px #000;">hasSymptom</div>
<div class="t" style="left:1262.50px;top:487.73px;line-height:40px;font-family:'Liberation Sans';font-weight:bold;font-size:23px;color:#000;transform:scaleX(1.0954);transform-origin:0 0;-webkit-text-stroke:0.45px #000;">continusously_increased_rashs</div>
<svg class="ab" style="left:1772.5px;top:463.0px" width="37.3" height="37.3" viewBox="0 0 37.3 37.3"><circle cx="18.65" cy="18.65" r="18.65" fill="#C0C0C0"/><path d="M16.05 17.95 A4.1 4.1 0 1 1 22.15 21.45 Q20.15 22.45 20.15 24.25 V25.05" fill="none" stroke="#fff" stroke-width="2.5"/><rect x="18.65" y="26.65" width="3" height="2.9" fill="#fff"/></svg>
<svg class="ab" style="left:1813.6px;top:463.0px" width="37.3" height="37.3" viewBox="0 0 37.3 37.3"><circle cx="18.65" cy="18.65" r="18.65" fill="#C0C0C0"/><g transform="translate(3.65,3.95)"><path d="M20.3 20.6 A8.4 8.4 0 1 1 23.4 13.5 V16.3 A2.45 2.45 0 0 1 18.5 16.3 V10.8" fill="none" stroke="#fff" stroke-width="2.1" stroke-linecap="round"/><circle cx="15" cy="14.5" r="3.5" fill="none" stroke="#fff" stroke-width="2.1"/></g></svg>
<svg class="ab" style="left:1854.8px;top:463.0px" width="37.3" height="37.3" viewBox="0 0 37.3 37.3"><circle cx="18.65" cy="18.65" r="18.65" fill="#C0C0C0"/><path d="M12.149999999999999 12.149999999999999 L25.15 25.15 M25.15 12.149999999999999 L12.149999999999999 25.15" stroke="#fff" stroke-width="2.6"/></svg>
<svg class="ab" style="left:1895.8px;top:463.0px" width="37.3" height="37.3" viewBox="0 0 37.3 37.3"><circle cx="18.65" cy="18.65" r="18.65" fill="#C0C0C0"/><circle cx="18.65" cy="18.65" r="7.2" fill="none" stroke="#fff" stroke-width="4.4"/></svg>
<div class="ab" style="left:1229.6px;top:524.5px;width:711px;height:39.200000000000045px;background:#FDF9D9;border-top:1.5px solid #EEEEEA"></div>
<div class="ab" style="left:1237.6px;top:538.5px;width:21.5px;height:13.5px;border-radius:3px;background:#3A73B2;border:1.3px solid #6E6E6E"></div>
<div class="t" style="left:1263.27px;top:525.78px;line-height:40px;font-family:'Liberation Sans';font-weight:normal;font-size:24px;color:#000;transform:scaleX(1.0291);transform-origin:0 0;">hasAssessmentOfSeverity</div>
<div class="t" style="left:1569.59px;top:525.78px;line-height:40px;font-family:'Liberation Sans';font-weight:normal;font-size:24px;color:#000;transform:scaleX(1.0083);transform-origin:0 0;">mild</div>
<svg class="ab" style="left:1854.9px;top:526.9px" width="37.3" height="37.3" viewBox="0 0 37.3 37.3"><circle cx="18.65" cy="18.65" r="18.65" fill="#C0C0C0"/><path d="M16.05 17.95 A4.1 4.1 0 1 1 22.15 21.45 Q20.15 22.45 20.15 24.25 V25.05" fill="none" stroke="#fff" stroke-width="2.5"/><rect x="18.65" y="26.65" width="3" height="2.9" fill="#fff"/></svg>
<svg class="ab" style="left:1896.0px;top:526.9px" width="37.3" height="37.3" viewBox="0 0 37.3 37.3"><circle cx="18.65" cy="18.65" r="18.65" fill="#C0C0C0"/><g transform="translate(3.65,3.95)"><path d="M20.3 20.6 A8.4 8.4 0 1 1 23.4 13.5 V16.3 A2.45 2.45 0 0 1 18.5 16.3 V10.8" fill="none" stroke="#fff" stroke-width="2.1" stroke-linecap="round"/><circle cx="15" cy="14.5" r="3.5" fill="none" stroke="#fff" stroke-width="2.1"/></g></svg>
<div class="ab" style="left:1229.6px;top:563.7px;width:711px;height:39.59999999999991px;background:#FDF9D9;border-top:1.5px solid #EEEEEA"></div>
<div class="ab" style="left:1237.6px;top:577.7px;width:21.5px;height:13.5px;border-radius:3px;background:#3A73B2;border:1.3px solid #6E6E6E"></div>
<div class="t" style="left:1263.26px;top:565.38px;line-height:40px;font-family:'Liberation Sans';font-weight:normal;font-size:24px;color:#000;transform:scaleX(1.0376);transform-origin:0 0;">hasPattern</div>
<div class="t" style="left:1400.00px;top:565.38px;line-height:40px;font-family:'Liberation Sans';font-weight:normal;font-size:24px;color:#000;transform:scaleX(1.0522);transform-origin:0 0;">syndrome_of_heat_in_blood</div>
<svg class="ab" style="left:1854.9px;top:566.1px" width="37.3" height="37.3" viewBox="0 0 37.3 37.3"><circle cx="18.65" cy="18.65" r="18.65" fill="#C0C0C0"/><path d="M16.05 17.95 A4.1 4.1 0 1 1 22.15 21.45 Q20.15 22.45 20.15 24.25 V25.05" fill="none" stroke="#fff" stroke-width="2.5"/><rect x="18.65" y="26.65" width="3" height="2.9" fill="#fff"/></svg>
<svg class="ab" style="left:1896.0px;top:566.1px" width="37.3" height="37.3" viewBox="0 0 37.3 37.3"><circle cx="18.65" cy="18.65" r="18.65" fill="#C0C0C0"/><g transform="translate(3.65,3.95)"><path d="M20.3 20.6 A8.4 8.4 0 1 1 23.4 13.5 V16.3 A2.45 2.45 0 0 1 18.5 16.3 V10.8" fill="none" stroke="#fff" stroke-width="2.1" stroke-linecap="round"/><circle cx="15" cy="14.5" r="3.5" fill="none" stroke="#fff" stroke-width="2.1"/></g></svg>
<div class="ab" style="left:1229.6px;top:603.3px;width:711px;height:40.0px;background:#FDF9D9;border-top:1.5px solid #EEEEEA"></div>
<div class="ab" style="left:1237.6px;top:617.3px;width:21.5px;height:13.5px;border-radius:3px;background:#3A73B2;border:1.3px solid #6E6E6E"></div>
<div class="t" style="left:1263.28px;top:604.08px;line-height:40px;font-family:'Liberation Sans';font-weight:normal;font-size:24px;color:#000;transform:scaleX(1.0236);transform-origin:0 0;">recommend</div>
<div class="t" style="left:1408.24px;top:604.08px;line-height:40px;font-family:'Liberation Sans';font-weight:normal;font-size:24px;color:#000;transform:scaleX(1.0562);transform-origin:0 0;">Corticosteroids</div>
<svg class="ab" style="left:1854.9px;top:605.6px" width="37.3" height="37.3" viewBox="0 0 37.3 37.3"><circle cx="18.65" cy="18.65" r="18.65" fill="#C0C0C0"/><path d="M16.05 17.95 A4.1 4.1 0 1 1 22.15 21.45 Q20.15 22.45 20.15 24.25 V25.05" fill="none" stroke="#fff" stroke-width="2.5"/><rect x="18.65" y="26.65" width="3" height="2.9" fill="#fff"/></svg>
<svg class="ab" style="left:1896.0px;top:605.6px" width="37.3" height="37.3" viewBox="0 0 37.3 37.3"><circle cx="18.65" cy="18.65" r="18.65" fill="#C0C0C0"/><g transform="translate(3.65,3.95)"><path d="M20.3 20.6 A8.4 8.4 0 1 1 23.4 13.5 V16.3 A2.45 2.45 0 0 1 18.5 16.3 V10.8" fill="none" stroke="#fff" stroke-width="2.1" stroke-linecap="round"/><circle cx="15" cy="14.5" r="3.5" fill="none" stroke="#fff" stroke-width="2.1"/></g></svg>
<div class="ab" style="left:1229.6px;top:643.3px;width:711px;height:67.70000000000005px;background:#FDF9D9;border-top:1.5px solid #EEEEEA"></div>
<div class="ab" style="left:1237.6px;top:657.3px;width:21.5px;height:13.5px;border-radius:3px;background:#3A73B2;border:1.3px solid #6E6E6E"></div>
<div class="t" style="left:1263.28px;top:643.78px;line-height:40px;font-family:'Liberation Sans';font-weight:normal;font-size:24px;color:#000;transform:scaleX(1.0241);transform-origin:0 0;">hasPrescription</div>
<div class="t" style="left:1263.25px;top:672.48px;line-height:40px;font-family:'Liberation Sans';font-weight:normal;font-size:24px;color:#000;transform:scaleX(1.0503);transform-origin:0 0;">decoction_of_cooling_blood_and_toxin_resolving</div>
<svg class="ab" style="left:1854.9px;top:645.6px" width="37.3" height="37.3" viewBox="0 0 37.3 37.3"><circle cx="18.65" cy="18.65" r="18.65" fill="#C0C0C0"/><path d="M16.05 17.95 A4.1 4.1 0 1 1 22.15 21.45 Q20.15 22.45 20.15 24.25 V25.05" fill="none" stroke="#fff" stroke-width="2.5"/><rect x="18.65" y="26.65" width="3" height="2.9" fill="#fff"/></svg>
<svg class="ab" style="left:1896.0px;top:645.6px" width="37.3" height="37.3" viewBox="0 0 37.3 37.3"><circle cx="18.65" cy="18.65" r="18.65" fill="#C0C0C0"/><g transform="translate(3.65,3.95)"><path d="M20.3 20.6 A8.4 8.4 0 1 1 23.4 13.5 V16.3 A2.45 2.45 0 0 1 18.5 16.3 V10.8" fill="none" stroke="#fff" stroke-width="2.1" stroke-linecap="round"/><circle cx="15" cy="14.5" r="3.5" fill="none" stroke="#fff" stroke-width="2.1"/></g></svg>
<div class="ab" style="left:1229.6px;top:711px;width:711px;height:1.5px;background:#EEEEEE"></div>
<div class="t" style="left:1204.68px;top:743.69px;line-height:40px;font-family:'Liberation Sans';font-weight:normal;font-size:26px;color:#838383;transform:scaleX(0.9575);transform-origin:0 0;">Data&#160;property&#160;assertions</div>
<svg class="ab" style="left:1483px;top:747px" width="37.5" height="37.5" viewBox="0 0 37.5 37.5"><circle cx="18.75" cy="18.75" r="18.75" fill="#C0C0C0"/><path d="M9.25 18.75 H28.25 M18.75 9.25 V28.25" stroke="#fff" stroke-width="2.6"/></svg>
<div class="ab" style="left:1236px;top:800.5px;width:21.5px;height:13.5px;border-radius:3px;background:#6C9A3C;border:1.3px solid #6E6E6E"></div>
<div class="t" style="left:1261.75px;top:788.93px;line-height:40px;font-family:'Liberation Sans';font-weight:bold;font-size:23px;color:#000;transform:scaleX(1.0464);transform-origin:0 0;-webkit-text-stroke:0.45px #000;">hasBSA</div>
<div class="t" style="left:1371.00px;top:788.93px;line-height:40px;font-family:'Liberation Sans';font-weight:bold;font-size:23px;color:#000;transform:scaleX(1.2205);transform-origin:0 0;-webkit-text-stroke:0.45px #000;">0.015</div>
<div class="ab" style="left:1229.6px;top:824px;width:711px;height:1.5px;background:#E8E8E8"></div>
<svg class="ab" style="left:1772.5px;top:790.6px" width="37.3" height="37.3" viewBox="0 0 37.3 37.3"><circle cx="18.65" cy="18.65" r="18.65" fill="#C0C0C0"/><path d="M16.05 17.95 A4.1 4.1 0 1 1 22.15 21.45 Q20.15 22.45 20.15 24.25 V25.05" fill="none" stroke="#fff" stroke-width="2.5"/><rect x="18.65" y="26.65" width="3" height="2.9" fill="#fff"/></svg>
<svg class="ab" style="left:1813.6px;top:790.6px" width="37.3" height="37.3" viewBox="0 0 37.3 37.3"><circle cx="18.65" cy="18.65" r="18.65" fill="#C0C0C0"/><g transform="translate(3.65,3.95)"><path d="M20.3 20.6 A8.4 8.4 0 1 1 23.4 13.5 V16.3 A2.45 2.45 0 0 1 18.5 16.3 V10.8" fill="none" stroke="#fff" stroke-width="2.1" stroke-linecap="round"/><circle cx="15" cy="14.5" r="3.5" fill="none" stroke="#fff" stroke-width="2.1"/></g></svg>
<svg class="ab" style="left:1854.8px;top:790.6px" width="37.3" height="37.3" viewBox="0 0 37.3 37.3"><circle cx="18.65" cy="18.65" r="18.65" fill="#C0C0C0"/><path d="M12.149999999999999 12.149999999999999 L25.15 25.15 M25.15 12.149999999999999 L12.149999999999999 25.15" stroke="#fff" stroke-width="2.6"/></svg>
<svg class="ab" style="left:1895.8px;top:790.6px" width="37.3" height="37.3" viewBox="0 0 37.3 37.3"><circle cx="18.65" cy="18.65" r="18.65" fill="#C0C0C0"/><circle cx="18.65" cy="18.65" r="7.2" fill="none" stroke="#fff" stroke-width="4.4"/></svg>
<div class="t" style="left:1204.69px;top:857.39px;line-height:40px;font-family:'Liberation Sans';font-weight:normal;font-size:26px;color:#838383;transform:scaleX(0.9525);transform-origin:0 0;">Negative&#160;object&#160;property&#160;assertions</div>
<svg class="ab" style="left:1600px;top:860.5px" width="37.5" height="37.5" viewBox="0 0 37.5 37.5"><circle cx="18.75" cy="18.75" r="18.75" fill="#C0C0C0"/><path d="M9.25 18.75 H28.25 M18.75 9.25 V28.25" stroke="#fff" stroke-width="2.6"/></svg>
<div class="t" style="left:1204.69px;top:935.19px;line-height:40px;font-family:'Liberation Sans';font-weight:normal;font-size:26px;color:#838383;transform:scaleX(0.9538);transform-origin:0 0;">Negative&#160;data&#160;property&#160;assertions</div>
<svg class="ab" style="left:1583px;top:938.5px" width="37.5" height="37.5" viewBox="0 0 37.5 37.5"><circle cx="18.75" cy="18.75" r="18.75" fill="#C0C0C0"/><path d="M9.25 18.75 H28.25 M18.75 9.25 V28.25" stroke="#fff" stroke-width="2.6"/></svg>
</body></html>
